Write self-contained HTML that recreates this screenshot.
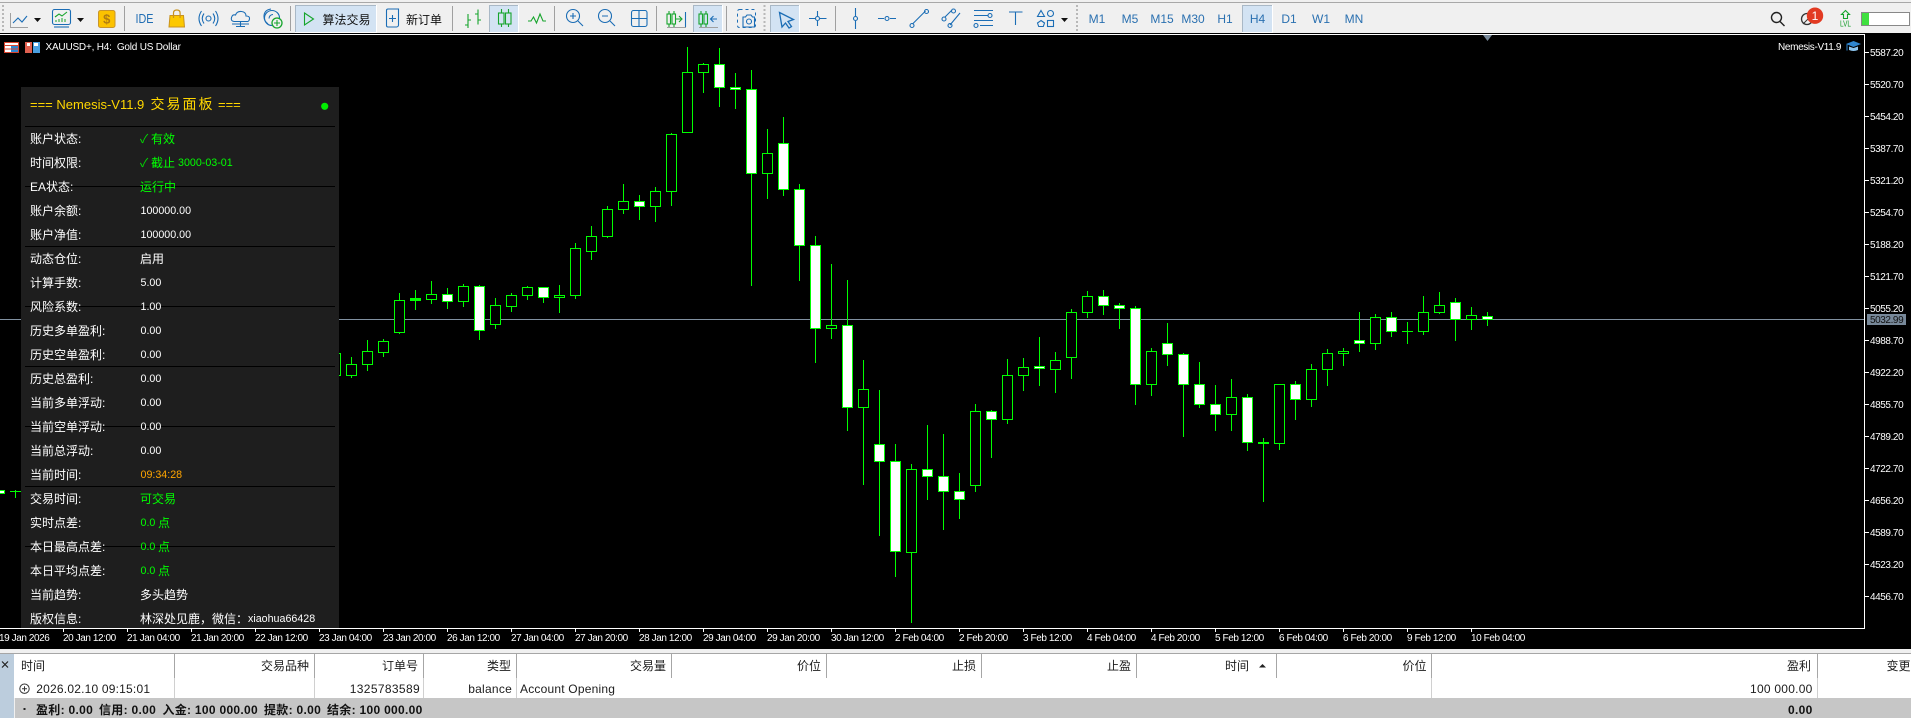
<!DOCTYPE html>
<html><head><meta charset="utf-8"><title>XAUUSD+, H4</title>
<style>
html,body{margin:0;padding:0;background:#000;width:1911px;height:718px;overflow:hidden}
svg{display:block}
text{font-family:"Liberation Sans","WenQuanYi Zen Hei","Noto Sans CJK SC",sans-serif;white-space:pre}
.ax{font-size:10px;letter-spacing:-.42px;fill:#fff}
.l{font-size:12px;fill:#fff}
.n{font-size:10.7px;fill:#fff}
.g{fill:#00ff00}
.tf{font-size:12px;fill:#2a70b0;text-anchor:middle}
.h{font-size:12px;fill:#1c1c1c;text-anchor:end}
.r{font-size:12px;fill:#1c1c1c}
.b{font-size:12px;font-weight:bold;fill:#111;letter-spacing:.3px}
.i{fill:none;stroke:#1b6db5;stroke-width:1.1}
.gi{fill:none;stroke:#16a52c;stroke-width:1.1}
</style></head><body>
<svg width="1911" height="718" viewBox="0 0 1911 718" xmlns="http://www.w3.org/2000/svg">
<rect width="1911" height="718" fill="#000"/>
<!-- toolbar -->
<rect width="1911" height="33" fill="#f0f0f0"/>
<rect y="2" width="1911" height="1" fill="#a8a8a8"/>
<g shape-rendering="crispEdges">
<rect x="0" y="34" width="1865" height="1" fill="#fff"/>
<rect x="1864" y="34" width="1" height="595" fill="#fff"/>
<rect x="0" y="628" width="1865" height="1" fill="#fff"/>
<g fill="#a0a0a0">
<rect x="124" y="6" width="1" height="25"/><rect x="290" y="6" width="1" height="25"/><rect x="452" y="6" width="1" height="25"/><rect x="554" y="6" width="1" height="25"/><rect x="656" y="6" width="1" height="25"/><rect x="726" y="6" width="1" height="25"/><rect x="835" y="6" width="1" height="25"/>
</g>
<g fill="#d3e3f3">
<rect x="295" y="5" width="81" height="27"/><rect x="489" y="5" width="29" height="27"/><rect x="693" y="5" width="29" height="27"/><rect x="770" y="5" width="29" height="27"/><rect x="1242" y="5" width="30" height="27"/>
</g>
<path d="M295.5 32V5.5H376M489.5 32V5.5H518M693.5 32V5.5H722M770.5 32V5.5H799M1242.5 32V5.5H1272" fill="none" stroke="#a9b8c6"/>
<path d="M376.5 5V32.5H295M518.5 5V32.5H489M722.5 5V32.5H693M799.5 5V32.5H770M1272.5 5V32.5H1242" fill="none" stroke="#fff"/>
</g>
<path d="M3 5V31M764.5 5V31M1077 5V31" stroke="#b8b8b8" stroke-width="2" stroke-dasharray="2 2" fill="none"/>
<!-- line chart icon -->
<path d="M10.5 13V27.5H28" fill="none" stroke="#a0a0a0"/>
<path class="i" d="M13 23L18 18L22 22L27 16"/>
<path d="M34 18h7l-3.500 4z" fill="#111"/>
<!-- market -->
<rect class="i" x="52.500" y="9.500" width="18" height="15" rx="2"/>
<path class="gi" d="M55 17l4-3 3 2 5-4"/>
<path d="M56 22v-2M59 22v-3M62 22v-4M65 22v-3" stroke="#16a52c" fill="none"/>
<path class="i" d="M54 27h15"/>
<path d="M77 18h7l-3.500 4z" fill="#111"/>
<!-- gold -->
<rect x="98.500" y="10.500" width="16.500" height="17" rx="2" fill="#fcc200" stroke="#c9962a"/>
<text x="106.700" y="23.500" font-size="13" text-anchor="middle" fill="#b07c12" style="font-weight:bold">$</text>
<text x="135.500" y="23" font-size="13" fill="#1f6db3" textLength="18" lengthAdjust="spacingAndGlyphs">IDE</text>
<!-- bag -->
<path d="M170 15.500h13.500l1 11.500h-15.500z" fill="#fcc800" stroke="#c8921f"/>
<path d="M173.500 18v-5q0-3 3.300-3t3.300 3v5" fill="none" stroke="#c8921f" stroke-width="1.200"/>
<!-- signal -->
<circle class="i" cx="208.500" cy="18.500" r="2.500"/>
<path class="i" d="M204 13.500q-3.500 5 0 10M213 13.500q3.500 5 0 10M201.500 11q-5 7.500 0 15M215.500 11q5 7.500 0 15"/>
<!-- cloud -->
<path class="i" d="M234 21.500q-3.500-.5-2.500-4t4-2.500q1.500-4 6-3.500t4.500 4.500q4 0 3.500 3t-3 2.500z"/>
<path class="i" d="M232 24h17M240.500 21.500v5M236 26.500h9"/>
<!-- radar -->
<circle class="i" cx="272" cy="18" r="7.500"/>
<path class="i" d="M268 24q-4-3-4-7.500q0-6.500 7-7.500 M273 14.500a4 4 0 0 0-4 4"/>
<circle cx="277" cy="23" r="5" fill="#f0f0f0" stroke="#16a52c" stroke-width="1.300"/>
<path class="gi" d="M277 20v6M274 23h6"/>
<!-- algo -->
<path class="gi" d="M304.500 13l9 6-9 6z"/>
<text class="r" x="322.500" y="24" fill="#111" style="fill:#111">算法交易</text>
<!-- new order -->
<path class="i" d="M386.500 10.500a1.500 1.500 0 0 1 1.500-1.500h10.500v16a2 2 0 0 1-2 2h-8.500a1.500 1.500 0 0 1-1.500-1.500z"/>
<path class="i" d="M392.500 15v7M389 18.500h7"/>
<text class="r" x="406" y="24" style="fill:#111">新订单</text>
<!-- bars -->
<path class="gi" d="M468 14v14M465 25h3M468 20h3M478 9.500v15M475 14h3M478 20h3"/>
<!-- candles -->
<path class="gi" d="M501.500 9v4M501.500 24v3M508.500 9v4M508.500 24v3"/>
<rect class="gi" x="498.500" y="13" width="5.500" height="11"/><rect class="gi" x="505.500" y="13" width="5.500" height="11"/>
<!-- line -->
<path class="gi" d="M528 21h3l2.500-4 3 6 3.500-9 3 7h3"/>
<!-- zoom -->
<circle class="i" cx="573" cy="16" r="6.500"/><path class="i" d="M578 21l5 5M570 16h6M573 13v6"/>
<circle class="i" cx="605" cy="16" r="6.500"/><path class="i" d="M610 21l5 5M602 16h6"/>
<!-- grid -->
<rect class="i" x="631.500" y="10.500" width="15.500" height="16" rx="2"/><path class="i" d="M639 10.500v16M631.500 18.500h15.500"/>
<!-- shift -->
<path class="gi" d="M669 11v3M669 24v3M674 11v3M674 24v3"/><rect class="gi" x="667" y="14" width="3.500" height="10"/><rect class="gi" x="672" y="14" width="3.500" height="10"/>
<path class="gi" d="M676 19h5M679 16l3 3-3 3"/><path class="i" d="M685.500 12v15"/>
<rect x="667" y="27" width="19" height="1" fill="#a0a0a0"/>
<path class="gi" d="M701 11v3M701 24v3M706 11v3M706 24v3"/><rect class="gi" x="699" y="14" width="3.500" height="10"/><rect class="gi" x="704" y="14" width="3.500" height="10"/>
<path class="i" d="M717 19h-6M713.500 16l-3 3 3 3"/>
<rect x="699" y="27" width="19" height="1" fill="#a0a0a0"/>
<!-- camera -->
<rect x="737.500" y="9.500" width="18" height="18" rx="2" fill="none" stroke="#1b6db5" stroke-dasharray="3 3"/>
<path class="i" d="M743 17h2.500l1.500-2h4l1.500 2h2v10h-11.500z" fill="#f0f0f0"/><circle class="i" cx="749" cy="21.500" r="2.500"/>
<!-- cursor -->
<path d="M779.500 12.500l14 7-5.500 2 3.500 5-2.500 1.500-3.500-5-3.500 4z" fill="#d3e3f3" stroke="#1b6db5" stroke-width="1.300"/>
<!-- crosshair -->
<path class="i" d="M817.500 11v5M817.500 21v5M809 18.500h6.500M820 18.500h6.500"/><circle class="i" cx="817.500" cy="18.500" r="2"/>
<!-- vline -->
<path class="i" d="M855.500 8v8M855.500 21v8"/><circle class="i" cx="855.500" cy="18.500" r="2"/>
<!-- hline -->
<path class="i" d="M878 18.500h6M890 18.500h6"/><circle class="i" cx="887" cy="18.500" r="2"/>
<!-- trend -->
<path class="i" d="M912.500 24l13-13"/><circle class="i" cx="912" cy="25.500" r="2"/><circle class="i" cx="926.500" cy="11.500" r="2"/>
<!-- channel -->
<path class="i" d="M945 17l7-7M950 25l10-12"/><circle class="i" cx="944" cy="19" r="2"/><circle class="i" cx="953.500" cy="11" r="2"/><circle class="i" cx="950" cy="25.500" r="2"/>
<!-- fib -->
<path class="i" d="M974 10.500h19M974 15.500h14M974 20.500h19M980 25.500h13"/><circle class="i" cx="990" cy="15.500" r="2"/><circle class="i" cx="976" cy="25.500" r="2"/>
<!-- T -->
<path class="i" d="M1009 12h13.500M1015.500 12v13"/>
<!-- shapes -->
<path class="i" d="M1041 10.500l3.500 6h-7z"/><circle class="i" cx="1050.500" cy="13.500" r="3"/>
<path class="i" d="M1041 20.500l3.500 2.500-1.200 3.500h-4.600l-1.200-3.500z"/><rect class="i" x="1047.500" y="20.500" width="6" height="6"/>
<path d="M1061 18h7l-3.500 4z" fill="#111"/>
<!-- timeframes -->
<text class="tf" x="1097" y="23">M1</text><text class="tf" x="1130" y="23">M5</text><text class="tf" x="1162" y="23">M15</text><text class="tf" x="1193" y="23">M30</text><text class="tf" x="1225" y="23">H1</text><text class="tf" x="1257.500" y="23">H4</text><text class="tf" x="1289" y="23">D1</text><text class="tf" x="1321" y="23">W1</text><text class="tf" x="1354" y="23">MN</text>
<!-- right tools -->
<circle cx="1776.500" cy="17.500" r="5" fill="none" stroke="#222" stroke-width="1.400"/><path d="M1780 21.500l4.500 4.500" stroke="#222" stroke-width="1.400"/>
<circle cx="1807" cy="19" r="5.500" fill="none" stroke="#333" stroke-width="1.300"/><path d="M1803 24l6-6" stroke="#333"/>
<circle cx="1815" cy="15.700" r="8.200" fill="#e23a22"/><text x="1815" y="20" font-size="12" fill="#fff" text-anchor="middle">1</text>
<path d="M1845.500 10.500l4 4h-2v4h-4v-4h-2z" fill="none" stroke="#16a52c" stroke-width="1.100"/>
<text x="1840" y="26.500" font-size="8" fill="#119a26" textLength="11" lengthAdjust="spacingAndGlyphs">LVL</text>
<rect x="1861.500" y="12.500" width="48" height="13" fill="#fff" stroke="#888"/><rect x="1862" y="13" width="7" height="12" fill="#3fe03f"/>
<!-- price line -->
<g shape-rendering="crispEdges">
<rect x="0" y="319" width="1864" height="1" fill="#8090a0"/>
<!-- candles -->
<path fill="none" stroke="#00ff00" d="M351.500 357V378M367.500 340V371M383.500 339V357M399.500 293V334M431.500 281V304M463.500 284V307M495.500 298V329M511.500 293V312M527.500 286V300M559.500 285V313M575.500 243V299M591.500 226V260M607.500 206V238M623.500 184V214M655.500 187V222M671.500 133V206M687.500 47V133M703.500 63V93M767.500 129V199M831.500 264V339M863.500 360V485M911.500 464V623M975.500 404V492M1007.500 359V424M1023.500 358V391M1055.500 352V393M1071.500 309V379M1087.500 291V318M1151.500 348V396M1231.500 379V431M1279.500 384V450M1311.500 364V407M1327.500 349V386M1343.500 348V366M1375.500 314V350M1423.500 296V335M1439.500 292V314M1471.500 307V330M447.500 288V309M479.500 285V340M543.500 287V303M639.500 195V220M719.500 48V107M735.500 73V109M751.500 70V286M783.500 117V196M799.500 184V281M815.500 236V363M847.500 280V431M879.500 390V536M895.500 444V577M927.500 425V500M943.500 434V530M959.500 473V519M991.500 410V458M1039.500 337V386M1103.500 290V315M1119.500 303V329M1135.500 306V405M1167.500 323V366M1183.500 353V437M1199.500 362V408M1215.500 385V431M1247.500 394V451M1295.500 381V420M1359.500 312V352M1391.500 312V337M1455.500 298V341M1487.500 312V326M415.500 290V310M1263.500 438V502M1407.500 322V344M15.500 490V498"/>
<path fill="#000" stroke="#00ff00" d="M330.500 353.500h10v22h-10zM346.500 364.500h10v11h-10zM362.500 351.500h10v13h-10zM378.500 341.500h10v11h-10zM394.500 300.500h10v32h-10zM426.500 294.500h10v5h-10zM458.500 286.500h10v15h-10zM490.500 305.500h10v19h-10zM506.500 295.500h10v11h-10zM522.500 287.500h10v8h-10zM554.500 295.500h10v2h-10zM570.500 248.500h10v47h-10zM586.500 236.500h10v15h-10zM602.500 209.500h10v27h-10zM618.500 201.500h10v8h-10zM650.500 191.500h10v15h-10zM666.500 134.500h10v57h-10zM682.500 72.500h10v60h-10zM698.500 64.500h10v8h-10zM762.500 153.500h10v20h-10zM826.500 325.500h10v3h-10zM858.500 389.500h10v18h-10zM906.500 469.500h10v83h-10zM970.500 411.500h10v74h-10zM1002.500 375.500h10v44h-10zM1018.500 367.500h10v8h-10zM1050.500 360.500h10v9h-10zM1066.500 312.500h10v45h-10zM1082.500 296.500h10v16h-10zM1146.500 351.500h10v33h-10zM1226.500 397.500h10v17h-10zM1274.500 384.500h10v59h-10zM1306.500 369.500h10v30h-10zM1322.500 353.500h10v16h-10zM1338.500 351.500h10v2h-10zM1370.500 317.500h10v26h-10zM1418.500 312.500h10v19h-10zM1434.500 305.500h10v7h-10zM1466.500 315.500h10v4h-10z"/>
<path fill="#fff" stroke="#00ff00" d="M442.500 294.500h10v7h-10zM474.500 286.500h10v44h-10zM538.500 287.500h10v10h-10zM634.500 201.500h10v5h-10zM714.500 64.500h10v23h-10zM730.500 87.500h10v2h-10zM746.500 89.500h10v84h-10zM778.500 143.500h10v46h-10zM794.500 189.500h10v56h-10zM810.500 245.500h10v83h-10zM842.500 325.500h10v82h-10zM874.500 444.500h10v17h-10zM890.500 461.500h10v90h-10zM922.500 469.500h10v7h-10zM938.500 476.500h10v15h-10zM954.500 491.500h10v8h-10zM986.500 411.500h10v8h-10zM1034.500 366.500h10v2h-10zM1098.500 296.500h10v9h-10zM1114.500 305.500h10v3h-10zM1130.500 308.500h10v76h-10zM1162.500 343.500h10v11h-10zM1178.500 354.500h10v30h-10zM1194.500 384.500h10v20h-10zM1210.500 404.500h10v10h-10zM1242.500 397.500h10v45h-10zM1290.500 384.500h10v15h-10zM1354.500 340.500h10v3h-10zM1386.500 317.500h10v14h-10zM1450.500 302.500h10v17h-10zM1482.500 316.500h10v3h-10zM-5.500 490.500h10v3h-10z"/>
<g fill="#00ff00"><rect x="410" y="298" width="11" height="3"/><rect x="1258" y="442" width="11" height="2"/><rect x="1402" y="331" width="11" height="1"/><rect x="10" y="491" width="11" height="1"/></g>
</g>
<path d="M1483 35h9l-4.500 6z" fill="#778899"/>
<!-- chart labels -->
<rect x="4.500" y="42.500" width="14" height="10" fill="#fff" stroke="#d8452f"/>
<path d="M5 45.500h13M5 49h13" stroke="#d8452f"/><path d="M11 46h7v2.500h-7zM11 49.500h7v2.500h-7z" fill="#2f86d0"/>
<rect x="25" y="42" width="7" height="11" fill="#e06050"/><rect x="33" y="42" width="7" height="11" fill="#4a9fe0"/><rect x="27" y="43" width="3" height="3" fill="#fff"/><rect x="34" y="43" width="4" height="3" fill="#fff"/>
<text class="ax" x="45.500" y="50" textLength="135">XAUUSD+, H4:  Gold US Dollar</text>
<text class="ax" x="1778" y="50" textLength="63">Nemesis-V11.9</text>
<path d="M1846 44l7.500-3 7.500 3-7.500 3z" fill="#2f86d0"/><path d="M1849 46.500v3.500q4.500 2 9 0v-3.500l-4.500 1.500z" fill="#8cc4ee"/><path d="M1847 44.500v6" stroke="#2f86d0"/>
<!-- price axis -->
<g shape-rendering="crispEdges" fill="#fff">
<rect x="1865" y="52" width="4" height="1"/><rect x="1865" y="84" width="4" height="1"/><rect x="1865" y="116" width="4" height="1"/><rect x="1865" y="148" width="4" height="1"/><rect x="1865" y="180" width="4" height="1"/><rect x="1865" y="212" width="4" height="1"/><rect x="1865" y="244" width="4" height="1"/><rect x="1865" y="276" width="4" height="1"/><rect x="1865" y="308" width="4" height="1"/><rect x="1865" y="340" width="4" height="1"/><rect x="1865" y="372" width="4" height="1"/><rect x="1865" y="404" width="4" height="1"/><rect x="1865" y="436" width="4" height="1"/><rect x="1865" y="468" width="4" height="1"/><rect x="1865" y="500" width="4" height="1"/><rect x="1865" y="532" width="4" height="1"/><rect x="1865" y="564" width="4" height="1"/><rect x="1865" y="596" width="4" height="1"/>
</g>
<text class="ax" x="1870" y="56">5587.20</text><text class="ax" x="1870" y="88">5520.70</text><text class="ax" x="1870" y="120">5454.20</text><text class="ax" x="1870" y="152">5387.70</text><text class="ax" x="1870" y="184">5321.20</text><text class="ax" x="1870" y="216">5254.70</text><text class="ax" x="1870" y="248">5188.20</text><text class="ax" x="1870" y="280">5121.70</text><text class="ax" x="1870" y="312">5055.20</text><text class="ax" x="1870" y="344">4988.70</text><text class="ax" x="1870" y="376">4922.20</text><text class="ax" x="1870" y="408">4855.70</text><text class="ax" x="1870" y="440">4789.20</text><text class="ax" x="1870" y="472">4722.70</text><text class="ax" x="1870" y="504">4656.20</text><text class="ax" x="1870" y="536">4589.70</text><text class="ax" x="1870" y="568">4523.20</text><text class="ax" x="1870" y="600">4456.70</text>
<rect x="1867" y="314" width="39" height="11" fill="#778899"/>
<text class="ax" x="1870" y="323" style="fill:#111">5032.99</text>
<!-- time axis -->
<path d="M63.500 629v3M127.500 629v3M191.500 629v3M255.500 629v3M319.500 629v3M383.500 629v3M447.500 629v3M511.500 629v3M575.500 629v3M639.500 629v3M703.500 629v3M767.500 629v3M831.500 629v3M895.500 629v3M959.500 629v3M1023.500 629v3M1087.500 629v3M1151.500 629v3M1215.500 629v3M1279.500 629v3M1343.500 629v3M1407.500 629v3M1471.500 629v3" stroke="#fff" shape-rendering="crispEdges"/>
<text class="ax" x="-1" y="641">19 Jan 2026</text><text class="ax" x="63" y="641">20 Jan 12:00</text><text class="ax" x="127" y="641">21 Jan 04:00</text><text class="ax" x="191" y="641">21 Jan 20:00</text><text class="ax" x="255" y="641">22 Jan 12:00</text><text class="ax" x="319" y="641">23 Jan 04:00</text><text class="ax" x="383" y="641">23 Jan 20:00</text><text class="ax" x="447" y="641">26 Jan 12:00</text><text class="ax" x="511" y="641">27 Jan 04:00</text><text class="ax" x="575" y="641">27 Jan 20:00</text><text class="ax" x="639" y="641">28 Jan 12:00</text><text class="ax" x="703" y="641">29 Jan 04:00</text><text class="ax" x="767" y="641">29 Jan 20:00</text><text class="ax" x="831" y="641">30 Jan 12:00</text><text class="ax" x="895" y="641">2 Feb 04:00</text><text class="ax" x="959" y="641">2 Feb 20:00</text><text class="ax" x="1023" y="641">3 Feb 12:00</text><text class="ax" x="1087" y="641">4 Feb 04:00</text><text class="ax" x="1151" y="641">4 Feb 20:00</text><text class="ax" x="1215" y="641">5 Feb 12:00</text><text class="ax" x="1279" y="641">6 Feb 04:00</text><text class="ax" x="1343" y="641">6 Feb 20:00</text><text class="ax" x="1407" y="641">9 Feb 12:00</text><text class="ax" x="1471" y="641">10 Feb 04:00</text>
<!-- panel -->
<rect x="21" y="87" width="318" height="541" fill="#1e1e1e"/>
<g fill="#000" shape-rendering="crispEdges"><rect x="25" y="126" width="310" height="1"/><rect x="25" y="186" width="310" height="1"/><rect x="25" y="246" width="310" height="1"/><rect x="25" y="306" width="310" height="1"/><rect x="25" y="366" width="310" height="1"/><rect x="25" y="426" width="310" height="1"/><rect x="25" y="486" width="310" height="1"/><rect x="25" y="546" width="310" height="1"/></g>
<text x="30" y="109" font-size="13" fill="#ffd700">=== Nemesis-V11.9</text>
<text x="150.500" y="109" font-size="14" fill="#ffd700" letter-spacing="2">交易面板</text>
<text x="218" y="109" font-size="13" fill="#ffd700">===</text>
<circle cx="324.700" cy="106.300" r="3.600" fill="#00ee00"/>
<text class="l" x="30" y="143">账户状态:</text>
<text class="l" x="30" y="167">时间权限:</text>
<text class="l" x="30" y="191">EA状态:</text>
<text class="l" x="30" y="215">账户余额:</text>
<text class="l" x="30" y="239">账户净值:</text>
<text class="l" x="30" y="263">动态仓位:</text>
<text class="l" x="30" y="287">计算手数:</text>
<text class="l" x="30" y="311">风险系数:</text>
<text class="l" x="30" y="335">历史多单盈利:</text>
<text class="l" x="30" y="359">历史空单盈利:</text>
<text class="l" x="30" y="383">历史总盈利:</text>
<text class="l" x="30" y="407">当前多单浮动:</text>
<text class="l" x="30" y="431">当前空单浮动:</text>
<text class="l" x="30" y="455">当前总浮动:</text>
<text class="l" x="30" y="479">当前时间:</text>
<text class="l" x="30" y="503">交易时间:</text>
<text class="l" x="30" y="527">实时点差:</text>
<text class="l" x="30" y="551">本日最高点差:</text>
<text class="l" x="30" y="575">本日平均点差:</text>
<text class="l" x="30" y="599">当前趋势:</text>
<text class="l" x="30" y="623">版权信息:</text>
<text class="l g" x="140" y="143" style="fill:#00e000">✓</text><text class="l g" x="151" y="143">有效</text>
<text class="l g" x="140" y="167" style="fill:#00e000">✓</text><text class="l g" x="151" y="167">截止</text><text class="n g" x="178" y="166">3000-03-01</text>
<text class="l g" x="140" y="191">运行中</text>
<text class="n" x="140.500" y="214">100000.00</text>
<text class="n" x="140.500" y="238">100000.00</text>
<text class="l" x="140" y="263">启用</text>
<text class="n" x="140.500" y="286">5.00</text>
<text class="n" x="140.500" y="310">1.00</text>
<text class="n" x="140.500" y="334">0.00</text>
<text class="n" x="140.500" y="358">0.00</text>
<text class="n" x="140.500" y="382">0.00</text>
<text class="n" x="140.500" y="406">0.00</text>
<text class="n" x="140.500" y="430">0.00</text>
<text class="n" x="140.500" y="454">0.00</text>
<text class="n" x="140.500" y="478" style="fill:#ffa500">09:34:28</text>
<text class="l g" x="140" y="503">可交易</text>
<text class="n g" x="140.500" y="526">0.0</text><text class="l g" x="158" y="527">点</text>
<text class="n g" x="140.500" y="550">0.0</text><text class="l g" x="158" y="551">点</text>
<text class="n g" x="140.500" y="574">0.0</text><text class="l g" x="158" y="575">点</text>
<text class="l" x="140" y="599">多头趋势</text>
<text class="l" x="140" y="623">林深处见鹿，微信：</text><text class="n" x="248" y="622">xiaohua66428</text>
<!-- table -->
<rect y="649" width="1911" height="69" fill="#f0f0f0"/>
<rect y="653" width="1911" height="1" fill="#a6a6a6"/>
<rect y="654" width="14" height="64" fill="#bccddd"/>
<rect x="14" y="654" width="1897" height="44" fill="#fff"/>
<rect x="15" y="698" width="1896" height="20" fill="#c6c6c6"/>
<g shape-rendering="crispEdges" fill="#a6a6a6"><rect x="174" y="654" width="1" height="24"/><rect x="314" y="654" width="1" height="24"/><rect x="423" y="654" width="1" height="24"/><rect x="516" y="654" width="1" height="24"/><rect x="671" y="654" width="1" height="24"/><rect x="826" y="654" width="1" height="24"/><rect x="981" y="654" width="1" height="24"/><rect x="1136" y="654" width="1" height="24"/><rect x="1276" y="654" width="1" height="24"/><rect x="1431" y="654" width="1" height="24"/><rect x="1817" y="654" width="1" height="24"/></g>
<g shape-rendering="crispEdges" fill="#d0d0d0"><rect x="174" y="678" width="1" height="20"/><rect x="314" y="678" width="1" height="20"/><rect x="423" y="678" width="1" height="20"/><rect x="516" y="678" width="1" height="20"/><rect x="1431" y="678" width="1" height="20"/><rect x="1817" y="678" width="1" height="20"/></g>
<path d="M2 661.500l6 6M8 661.500l-6 6" stroke="#222" stroke-width="1.200" fill="none"/>
<text class="r" x="21" y="670">时间</text>
<text class="h" x="309" y="670">交易品种</text><text class="h" x="418" y="670">订单号</text><text class="h" x="511" y="670">类型</text><text class="h" x="666" y="670">交易量</text><text class="h" x="821" y="670">价位</text><text class="h" x="976" y="670">止损</text><text class="h" x="1131" y="670">止盈</text><text class="h" x="1249" y="670">时间</text><path d="M1259 667.500h7l-3.500-3.500z" fill="#222"/><text class="h" x="1426.500" y="670">价位</text><text class="h" x="1811" y="670">盈利</text><text class="r" x="1886.500" y="670">变更</text>
<circle cx="24.500" cy="688.700" r="4.700" fill="none" stroke="#333"/><path d="M22 688.700h5M24.500 686.200v5" stroke="#333" fill="none"/>
<text class="r" x="36.300" y="693" letter-spacing=".2">2026.02.10 09:15:01</text>
<text class="h" x="420" y="693" letter-spacing=".35">1325783589</text>
<text class="h" x="512" y="693" letter-spacing=".25">balance</text>
<text class="r" x="520" y="693" letter-spacing=".2">Account Opening</text>
<text class="h" x="1812.600" y="693" letter-spacing=".25">100 000.00</text>
<rect x="23.500" y="708" width="2" height="2" fill="#222"/>
<text class="b" x="36" y="714">盈利: 0.00</text><text class="b" x="99" y="714">信用: 0.00</text><text class="b" x="162.400" y="714">入金: 100 000.00</text><text class="b" x="264" y="714">提款: 0.00</text><text class="b" x="327" y="714">结余: 100 000.00</text>
<text class="b" x="1812.600" y="714" text-anchor="end">0.00</text>
</svg>
</body></html>
